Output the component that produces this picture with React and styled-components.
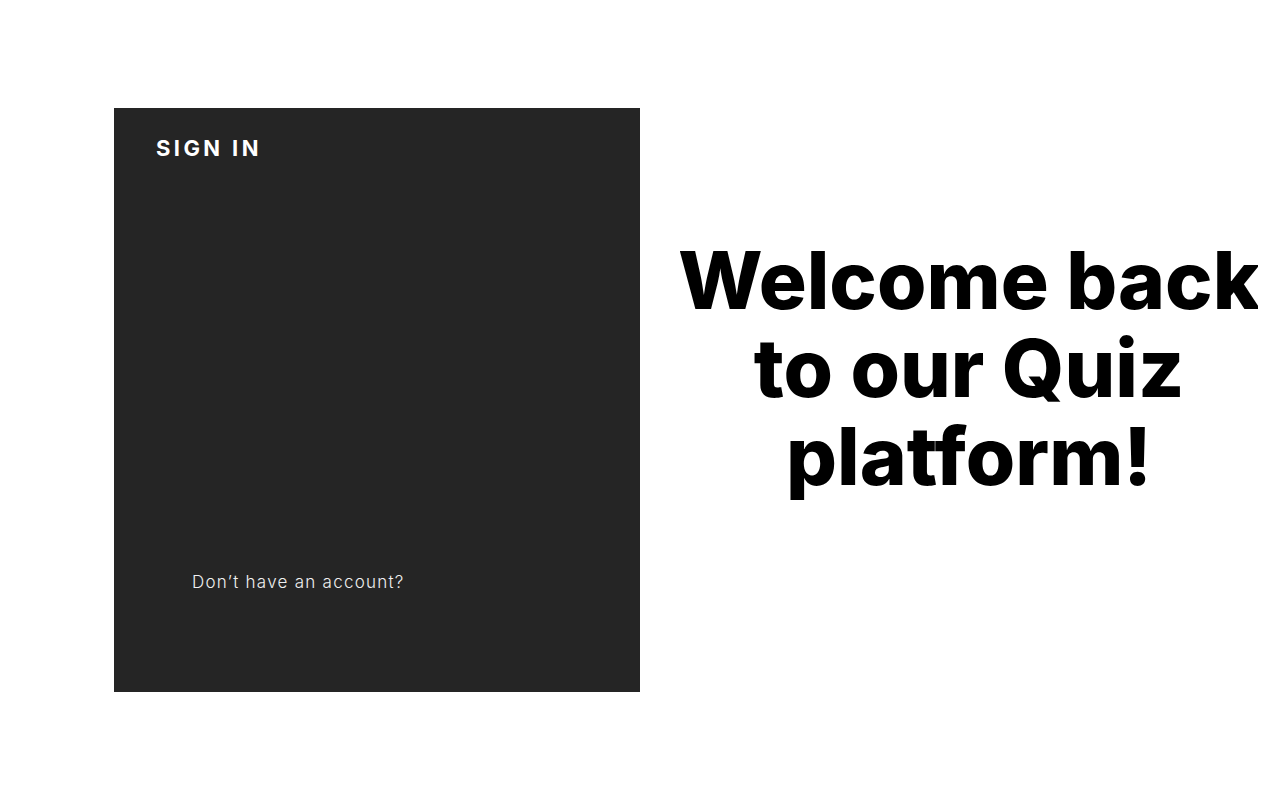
import React from "react";
import styled, { createGlobalStyle } from "styled-components";

const GlobalStyle = createGlobalStyle`
  html, body {
    margin: 0;
    padding: 0;
    background: #fff;
    font-family: "Inter", "Liberation Sans", sans-serif;
  }
`;

const Page = styled.div`
  width: 1280px;
  height: 800px;
  display: flex;
  align-items: center;
  overflow: hidden;
`;

const Panel = styled.section`
  box-sizing: border-box;
  width: 526px;
  height: 584px;
  margin-left: 114px;
  flex-shrink: 0;
  background: #252525;
  padding: 26px 42px 0;
  display: flex;
  flex-direction: column;
`;

const PanelTitle = styled.h2`
  margin: 0;
  color: #fff;
  font-size: 22px;
  font-weight: 700;
  letter-spacing: 3.4px;
  line-height: 28px;
`;

const FormArea = styled.div`
  flex: 1;
`;

const SignupPrompt = styled.p`
  margin: 0 0 100px 36px;
  color: #f0f0f0;
  font-size: 17px;
  font-weight: 300;
  letter-spacing: 1.25px;
`;

// headline column; the reference clips the last letter at x=1256
const Hero = styled.div`
  align-self: flex-start;
  width: 578px;
  margin: 236px 0 0 40px;
  overflow: hidden;
  display: flex;
  justify-content: center;
`;

const Headline = styled.h1`
  margin: 0;
  white-space: nowrap;
  text-align: center;
  color: #000;
  font-size: 80px;
  font-weight: 800;
  line-height: 88px;
  letter-spacing: 0;
`;

export default function App() {
  return (
    <>
      <GlobalStyle />
      <Page>
        <Panel>
          <PanelTitle>SIGN IN</PanelTitle>
          <FormArea />
          <SignupPrompt>Don’t have an account?</SignupPrompt>
        </Panel>
        <Hero>
          <Headline>
            Welcome back
            <br />
            to our Quiz
            <br />
            platform!
          </Headline>
        </Hero>
      </Page>
    </>
  );
}
